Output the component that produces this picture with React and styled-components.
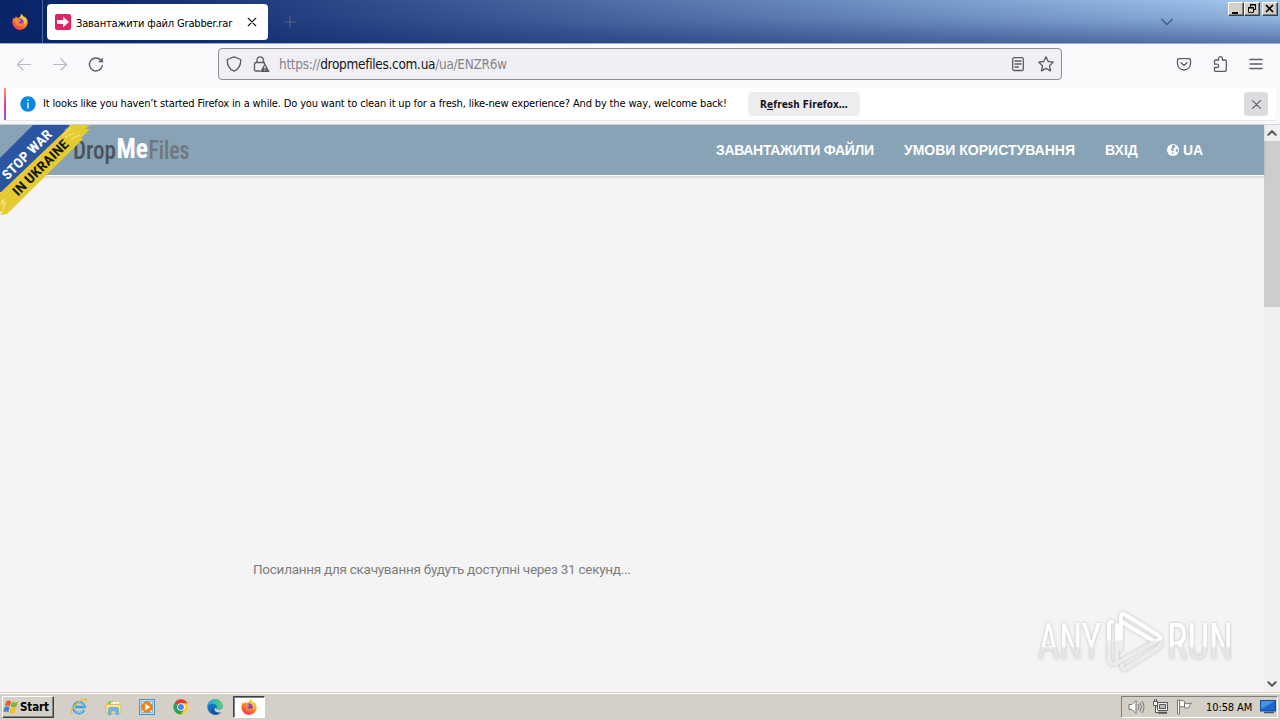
import React from "react";
import styled, { createGlobalStyle } from "styled-components";

const Global = createGlobalStyle`
  * { box-sizing: border-box; }
  body { margin: 0; overflow: hidden; font-family: "DejaVu Sans Condensed", "DejaVu Sans", "Noto Sans", sans-serif; font-stretch: condensed; font-size: 11px; color: #15141a; }
  svg { display: block; flex: none; }
`;

const Desktop = styled.div`
  width: 1280px; height: 720px; display: flex; flex-direction: column; overflow: hidden; background: #f4f4f4;
`;
const TitleBar = styled.header`
  height: 44px; display: flex; flex: none; position: relative;
  border-bottom: 1px solid #a3abc0;
  background: linear-gradient(to bottom, rgba(10,36,106,0) 0%, rgba(10,36,106,.15) 45%, rgba(10,36,106,.5) 100%),
    linear-gradient(to right, #0a246a 0%, #0d286f 8%, #a6caf0 100%);
`;
const Launcher = styled.div`
  width: 43px; padding: 14px 0 0 12px; border-right: 1px solid #536595;
`;
const Tab = styled.div`
  width: 221px; height: 36px; margin: 4px 0 0 4px; padding: 0 11px 0 8px; border-radius: 4px; background: #fff;
  display: flex; align-items: center;
`;
const TabTitle = styled.span`
  flex: 1; margin-left: 5px; padding-top: 2px; font-size: 11px; letter-spacing: -0.16px; white-space: nowrap; color: #000;
`;
const NewTab = styled.div` padding: 16px 0 0 16px; `;
const TabList = styled.div` margin-left: auto; padding: 17px 107px 0 0; `;
const WindowButtons = styled.div` position: absolute; right: 2px; top: 2px; display: flex; `;
const WinButton = styled.div`
  width: 16px; height: 14px; margin-left: ${(p) => (p.$gap ? 2 : 0)}px; background: #d4d0c8;
  border: 1px solid; border-color: #fff #404040 #404040 #fff; box-shadow: inset -1px -1px #808080;
`;
const Toolbar = styled.div`
  height: 44px; flex: none; display: flex; align-items: center; background: #f9f9fb; padding: 0 16px 4px;
  color: #5b5b66;
`;
const NavButtons = styled.div` display: flex; gap: 20px; width: 202px; `;
const AddressBar = styled.div`
  width: 844px; height: 32px; border: 1px solid #8b8b94; border-radius: 4px; background: #f0f0f4;
  display: flex; align-items: center; padding: 0 7px; color: #5b5b66;
`;
const LockIcon = styled.svg` margin-left: 10px; `;
const InfoIcon = styled.svg` margin-left: 14px; `;
const Url = styled.div`
  flex: 1; margin-left: 9px; font-size: 13.5px; letter-spacing: -0.3px; color: #85858d; white-space: nowrap;
  b { font-weight: 400; color: #15141a; }
`;
const BarIcons = styled.div` display: flex; gap: 12px; `;
const ToolIcons = styled.div` display: flex; gap: 20px; margin-left: auto; `;
const NoticeArea = styled.div` height: 37px; flex: none; padding: 0 4px 4px; background: #f9f9fb; border-bottom: 1px solid #cfd8df; `;
const Notice = styled.div`
  height: 32px; display: flex; align-items: center; background: #fff; border-radius: 2px; padding-right: 8px;
  box-shadow: 0 1px 1px #e1e6eb;
`;
const Accent = styled.div` width: 2px; height: 32px; background: linear-gradient(#ff9a6c, #e3418f 50%, #8a55dd); `;
const NoticeText = styled.span`
  margin-left: 7px; width: 705px; padding-bottom: 1px; font-size: 11px; letter-spacing: -0.15px; white-space: nowrap; color: #000;
`;
const RefreshButton = styled.div`
  width: 112px; height: 24px; border-radius: 4px; background: #ededf0; text-align: center; line-height: 25px;
  font-weight: 700; font-size: 10px; letter-spacing: 0.05px;
`;
const Dismiss = styled.div`
  width: 24px; height: 24px; margin-left: auto; border-radius: 4px; background: #dcdcdf; display: grid; place-items: center; color: #5b5b66;
`;
const Viewport = styled.div` flex: 1; min-height: 0; display: flex; `;
const Page = styled.main` flex: 1; position: relative; background: #f4f4f4; display: flex; flex-direction: column; `;
const SiteHeader = styled.div`
  height: 51px; flex: none; background: #87a3b5; border-bottom: 1px solid #fff; box-shadow: 0 1px 3px rgba(0,0,0,.18);
  display: flex; align-items: center; padding-left: 72px;
`;
const Ribbon = styled.svg` position: absolute; left: 0; top: 0; `;
const SiteNav = styled.nav`
  margin-left: auto; padding-right: 62px; display: flex; gap: 30px;
  font: 700 14px "Liberation Sans", Arial, sans-serif; color: #fff; white-space: nowrap;
`;
const NavItem = styled.span` display: flex; align-items: center; gap: 4px; width: ${(p) => p.$w}px; letter-spacing: ${(p) => p.$ls || 0}px; `;
const Countdown = styled.p`
  margin: 383px 0 0 253px; font: 400 13.5px/20px Roboto, sans-serif; color: #7d7d7d; white-space: nowrap; letter-spacing: -0.26px;
`;
const Watermark = styled.svg` position: absolute; left: 1030px; top: 480px; `;
const ScrollBar = styled.div` width: 16px; background: #f0f0f0; display: flex; flex-direction: column; `;
const ScrollArrow = styled.div` height: 16px; display: grid; place-items: center; color: #505050; `;
const Thumb = styled.div` height: 166px; background: #cdcdcd; margin-bottom: auto; `;
const Taskbar = styled.footer`
  height: 28px; flex: none; background: #d4d0c8; box-shadow: inset 0 1px #d4d0c8, inset 0 2px #fff;
  display: flex; padding: 4px 2px 2px; align-items: center;
`;
const StartButton = styled.div`
  width: 52px; height: 22px; border: 1px solid; border-color: #fff #404040 #404040 #fff; box-shadow: inset -1px -1px #808080;
  display: flex; align-items: center; padding-left: 0; gap: 0; font-weight: 700; font-size: 11.5px; letter-spacing: -0.1px; color: #000;
`;
const QuickLaunch = styled.div` display: flex; align-items: center; margin-left: 8px; `;
const TaskItem = styled.div`
  width: ${(p) => (p.$active ? 32 : 34)}px; height: 22px; display: grid; place-items: center;
  margin-left: ${(p) => (p.$active ? 1 : 0)}px;
  background: ${(p) => (p.$active ? "#fff" : "transparent")};
  border: ${(p) => (p.$active ? "1px solid" : "0")}; border-color: #404040 #fff #fff #404040;
  box-shadow: ${(p) => (p.$active ? "inset 1px 1px #808080" : "none")};
`;
const Tray = styled.div`
  margin-left: auto; width: 157px; height: 22px; border: 1px solid; border-color: #808080 #fff #fff #808080;
  display: flex; align-items: center; padding: 0 1px 0 6px; gap: 7px;
`;
const Clock = styled.span` width: 47px; margin-left: 6px; margin-right: 1px; font-size: 11px; letter-spacing: -0.1px; white-space: nowrap; color: #000; `;

const Line = ({ size = 16, children, w = 1.2, ...rest }) => (
  <svg width={size} height={size} viewBox="0 0 16 16" fill="none" stroke="currentColor" strokeWidth={w} strokeLinecap="round" strokeLinejoin="round" {...rest}>{children}</svg>
);

const FirefoxIcon = ({ id }) => (
  <svg width="16" height="16" viewBox="0 0 16 16">
    <defs>
      <linearGradient id={id} x1=".85" y1="0" x2=".25" y2="1">
        <stop offset="0" stopColor="#fff044" /><stop offset=".4" stopColor="#ffa125" />
        <stop offset=".75" stopColor="#ff5b33" /><stop offset="1" stopColor="#f0356a" />
      </linearGradient>
    </defs>
    <path d="M1.6 3.5 2.8 5 4 2.2l1.2 2L8 3.1 9.4 0l1.8 2.3.8 1.4.6-1.2c2 1.6 3.1 3.8 3.1 6A7.6 7.6 0 0 1 8 16 7.6 7.6 0 0 1 .4 8.500c0-1.9.4-3.6 1.200-5Z" fill={`url(#${id})`} />
    <circle cx="8.200" cy="8" r="3.500" fill="#8044d8" />
    <path d="M3.700 5.400c1.500-.8 3.300-.4 4.200.6l1.200.4-1.800 1.200c-1 .5-1 1.600.2 2 1.600.5 2.400-.5 4-.3-.8 2-2.500 2.800-4.300 2.500C4.600 11.400 3 8.500 3.700 5.400Z" fill="#ff8a2d" />
    <path d="M9.400 0 11.400 2.500C14 5 14.200 8 12.400 11c.3-3-.5-4.600-2.100-6C9.200 3.900 8.600 2 9.400 0Z" fill="#ffc933" />
  </svg>
);

const ChromeIcon = () => (
  <svg width="16" height="16" viewBox="0 0 16 16">
    <circle cx="8" cy="8" r="7.600" fill="#fc3" />
    <path d="M8 8 1.400 4.200A7.600 7.600 0 0 1 14.600 4.200H8Z" fill="#e33b2e" />
    <path d="M1.400 4.200A7.600 7.600 0 0 0 8 15.600L11.200 9.900 8 8Z" fill="#2da24c" />
    <circle cx="8" cy="8" r="3.800" fill="#fff" /><circle cx="8" cy="8" r="2.900" fill="#4285f4" />
  </svg>
);

const EdgeIcon = () => (
  <svg width="16" height="16" viewBox="0 0 16 16">
    <defs>
      <linearGradient id="edgeTop"><stop stopColor="#2b9fe0" /><stop offset="1" stopColor="#52d66c" /></linearGradient>
    </defs>
    <circle cx="8" cy="8" r="7.700" fill="#1272c2" />
    <path d="M.4 7.500C1 3 4.200.3 8.200.3c4.500 0 7.500 3 7.500 6.500 0 2.400-1.900 4-4.200 4-1.700 0-2.600-.7-2.200-1.500.8-1.100.7-2.400-.3-3.300C6.700 4 2.400 4.500.4 7.500Z" fill="url(#edgeTop)" />
    <path d="M6.300 8.500c-.3 2.500 1.700 5 4.700 5 1.500 0 2.700-.5 3.400-1-1.600 3-5 3.800-7.600 2.900C3.600 14 3.600 9.800 6.300 8.500Z" fill="#174f9b" />
    <path d="M8.800 8.300c-.4 1.300.8 2.500 2.700 2.500 1.500 0 2.800-.5 4.500-2v3.900l-1.500.3c-2.600 1.300-6.500.3-7-2.200Z" fill="#d4d0c8" />
  </svg>
);

const IeIcon = () => (
  <svg width="18" height="18" viewBox="0 0 18 18" fill="none">
    <path d="M14 12.200a5.500 5.500 0 1 1 .6-3.200H5" stroke="#3f9ede" strokeWidth="2.600" />
    <path d="M13.500 12.200a5 5 0 1 1 .6-3.700" stroke="#8fdcfb" strokeWidth="1" />
    <path d="M2.500 15.800C-1 13.500 5 5.500 11 2.300c4-2.100 6-1.400 5.300 1.700" stroke="#e6ba2b" strokeWidth="1.300" />
  </svg>
);

const FolderIcon = () => (
  <svg width="17" height="17" viewBox="0 0 17 17">
    <path d="M1.500 3.500h5l1 1.500H15v9H1.500Z" fill="#e7c663" />
    <path d="M3 2h5v3H3Z" fill="#7fcf71" /><path d="M6 3h8v3H6Z" fill="#fff3c4" />
    <path d="M1 5.500h15V14H1Z" fill="#f8e59b" stroke="#d5b250" strokeWidth=".7" />
    <path d="M3.500 15.500V10q0-1.500 1.500-1.500h7q1.500 0 1.500 1.500v5.500H11V12H6v3.500Z" fill="#72b8e2" stroke="#4b93c2" strokeWidth=".6" />
  </svg>
);

const PlayerIcon = () => (
  <svg width="16" height="16" viewBox="0 0 16 16">
    <rect x=".5" y=".5" width="15" height="15" fill="#b8dcf4" stroke="#5191c4" />
    <rect x="2.500" y="2.500" width="11" height="11" fill="#e7f4fd" stroke="#89bada" />
    <circle cx="8" cy="8" r="5.300" fill="#f38417" stroke="#d56908" strokeWidth=".6" />
    <path d="M6.300 4.700 11.300 8l-5 3.300Z" fill="#fff" />
  </svg>
);

const WindowsIcon = () => (
  <svg width="17" height="16" viewBox="0 0 17 16">
    <path d="M3.300 2.400C5 1.100 6.800 1.300 8.200 2.300L6.800 7.300C5.300 6.300 3.600 6.300 1.900 7.400Z" fill="#e65c26" />
    <path d="M9 2.800c1.800 1 3.600.9 5.900-.5l-1.500 5.200c-2.100 1.200-4 1.100-5.800.1Z" fill="#7eb82f" />
    <path d="M1.700 8.200c1.800-1 3.400-1 4.900 0l-1.400 5C3.700 12.200 2 12.200.2 13.300Z" fill="#3586d4" />
    <path d="M7.400 8.500c1.900 1 3.700.9 5.800-.3l-1.400 5.200c-2.200 1.400-4 1.300-5.800.3Z" fill="#f5bf26" />
  </svg>
);

const GlobeIcon = () => (
  <svg width="12" height="12" viewBox="0 0 12 12">
    <circle cx="6" cy="6" r="6" fill="#fff" />
    <path d="M5 1.200 8 .8 7.400 2l1.300.5-.9 1.400-1.500.4-.8 1 1.600.5-.8 1.500-1.600-.7-1-1.500 1.300-1.800Zm4 4.100 1.600-.4.4 1.600-1 1.700-1-.5-.5-1.400ZM5.200 8l1.300.8-.6 1.500-1-.8Z" fill="#87a3b5" />
  </svg>
);

/* Text squeezed horizontally to a given drawn width. */
const Squeezed = ({ x, y, width, squeeze, children, ...rest }) => (
  <text transform={`translate(${x} ${y}) scale(${squeeze} 1)`} textLength={width / squeeze} lengthAdjust="spacingAndGlyphs" {...rest}>{children}</text>
);

const SiteLogo = () => (
  <svg width="120" height="40" viewBox="0 0 120 40" fontFamily="Roboto, sans-serif">
    <Squeezed x={1} y={29} width={43} squeeze={0.78} fontSize="25" fontWeight="500" fill="#4b545b">Drop</Squeezed>
    <Squeezed x={44.5} y={28} width={31.5} squeeze={0.78} fontSize="27" fontWeight="700" fill="#fff">Me</Squeezed>
    <Squeezed x={76.5} y={29} width={41} squeeze={0.75} fontSize="25" fontWeight="500" fill="#70777c">Files</Squeezed>
  </svg>
);

const StopWarRibbon = () => (
  <Ribbon width="92" height="92" viewBox="0 0 92 92" fontFamily="Roboto, sans-serif">
    <path d="M0 33 33 0H72L64 5 66 6 3 68 0 67Z" fill="#2a55a0" />
    <path d="M0 68 66 5 70 0 90 0 85 4 90 4 81 13 83 14 7 89 0 90 3 86 0 87Z" fill="#e6ca32" />
    <path d="m0 78 4-4-2 6 4-3-3 7m59-73 9-8m-6 9 9-4m-3 6 9-4" fill="none" stroke="#f8e98c" strokeWidth="1" />
    <g transform="rotate(-45)" fontSize="13.5" fontWeight="700">
      <text x="-34" y="44.500" fill="#fff" textLength="64" lengthAdjust="spacingAndGlyphs">STOP WAR</text>
      <text x="-38" y="63.500" fill="#171918" textLength="73" lengthAdjust="spacingAndGlyphs">IN UKRAINE</text>
    </g>
  </Ribbon>
);

const PlayWatermark = () => (
  <Watermark width="212" height="74" viewBox="0 0 212 74">
    <defs>
      <linearGradient id="wm" x1="0" y1="0" x2="0" y2="74" gradientUnits="userSpaceOnUse">
        <stop offset=".47" stopColor="#fff" /><stop offset=".49" stopColor="#ececec" />
      </linearGradient>
      <linearGradient id="wmText" x1="0" y1="0" x2="0" y2="1">
        <stop offset=".58" stopColor="#fff" /><stop offset=".61" stopColor="#e6e6e6" />
      </linearGradient>
      <filter id="wmShade" x="-10%" y="-10%" width="120%" height="125%">
        <feDropShadow dx="0" dy="0" stdDeviation="1.600" floodColor="#777" floodOpacity=".5" />
      </filter>
    </defs>
    <g filter="url(#wmShade)">
      <g fill="url(#wmText)" fontFamily="Roboto, sans-serif" fontWeight="400" fontSize="50">
        <Squeezed x={8} y={54} width={63} squeeze={0.68}>ANY</Squeezed>
        <Squeezed x={137} y={54} width={66} squeeze={0.68}>RUN</Squeezed>
      </g>
      <g fill="none" stroke="url(#wm)" strokeWidth="4" strokeLinejoin="round" strokeLinecap="round">
        <path d="M91 45V11q0-3 3-2l34 21q5 3 0 5L87 58V20" />
        <path d="M92 17 125 37M87 58l-5 1q-3-1-3-4V20q0-3 3-3M92 60V62q0 3 3 2L127 44q4-3 4-6" />
      </g>
    </g>
  </Watermark>
);

export default function App() {
  return (
    <Desktop>
      <Global />
      <TitleBar>
        <Launcher><FirefoxIcon id="ffTitle" /></Launcher>
        <Tab>
          <svg width="16" height="16" viewBox="0 0 16 16">
            <rect width="16" height="16" rx="2" fill="#df2460" />
            <path d="M2 6h6V2.500L14 8l-6 5.500V10H2Z" fill="#fff" />
          </svg>
          <TabTitle>Завантажити файл Grabber.rar</TabTitle>
          <Line size={10} w={1.800}><path d="M2 2 14 14M14 2 2 14" /></Line>
        </Tab>
        <NewTab><Line size={12} w={1.500} color="#5a6478"><path d="M8 0V16M0 8H16" /></Line></NewTab>
        <TabList><Line size={12} w={2.300} color="#46618d"><path d="m1 3 7 7 7-7" /></Line></TabList>
        <WindowButtons>
          <WinButton><svg width="14" height="12"><path d="M3 9h6v2H3Z" /></svg></WinButton>
          <WinButton><svg width="14" height="12" fill="none" stroke="#000"><path d="M5.500 4V1.500h5v5H9M5 2h6M3.500 4.500h5v5h-5ZM3 5h6" /></svg></WinButton>
          <WinButton $gap><svg width="14" height="12"><path d="m3 2 7 7M10 2 3 9" stroke="#000" strokeWidth="1.700" /></svg></WinButton>
        </WindowButtons>
      </TitleBar>
      <Toolbar>
        <NavButtons>
          <Line color="#b9b9c0"><path d="M1.500 8.500h13M7 3 1.500 8.500 7 14" /></Line>
          <Line color="#b9b9c0"><path d="M1.500 8.500h13M9 3 14.500 8.500 9 14" /></Line>
          <Line w={1.400}><path d="M14.300 9.800A6.500 6.500 0 1 1 12.700 4L14.500 5.800" /><path d="M14.700 1.500v4.700H10Z" fill="currentColor" stroke="none" /></Line>
        </NavButtons>
        <AddressBar>
          <Line w={1.300}><path d="M8 .8 14.700 3.500C15 8.500 13 13 8 15.200 3 13 1 8.500 1.300 3.500Z" /></Line>
          <LockIcon width="18" height="16" viewBox="0 0 18 16" fill="none" stroke="currentColor" strokeWidth="1.300">
            <path d="M5 6.500V4a3.200 3.200 0 0 1 6.400 0v2.500M8 15H4q-1.500 0-1.500-1.500V8q0-1.500 1.500-1.500h8.300V8" />
            <path d="m12.900 7 4.800 9H8Z" fill="currentColor" stroke="none" /><path d="M12.900 10v2.500M12.900 13.500v1" stroke="#fff" strokeWidth="1.100" />
          </LockIcon>
          <Url>https://<b>dropmefiles.com.ua</b>/ua/ENZR6w</Url>
          <BarIcons>
            <Line w={1.300}><rect x="2.700" y="1.700" width="10.600" height="12.800" rx="1.500" /><path d="M5 5h6M5 8h6M5 11h3.500" /></Line>
            <Line w={1.300}><path d="m8 .8 2.200 4.700 5.100.6-3.800 3.600 1 5.200L8 12.400l-4.500 2.500 1-5.200L.7 6.100l5.100-.6Z" /></Line>
          </BarIcons>
        </AddressBar>
        <ToolIcons>
          <Line w={1.300}><path d="M3 2.700h10q1.500 0 1.500 1.500V7.500a6.500 6.500 0 0 1-13 0V4.200Q1.500 2.700 3 2.700ZM5 6.700l3 2.800 3-2.800" /></Line>
          <Line w={1.300}><path d="M2.500 6.500V5q0-1 1-1h3V2.600a1.900 1.900 0 0 1 3.800 0V4H13q1.300 0 1.300 1.300v8.800q0 1.200-1.300 1.200H3.500q-1 0-1-1V11.500H5a1.700 1.700 0 0 0 0-3.400H2.500Z" /></Line>
          <Line w={1.300}><path d="M2 3.500h12M2 8h12M2 12.500h12" /></Line>
        </ToolIcons>
      </Toolbar>
      <NoticeArea>
        <Notice>
          <Accent />
          <InfoIcon width="16" height="16" viewBox="0 0 16 16">
            <circle cx="8" cy="8" r="7.700" fill="#0a87e2" /><path d="M8 3.500v1.500M8 6.500v6" stroke="#fff" strokeWidth="1.400" />
          </InfoIcon>
          <NoticeText>It looks like you haven’t started Firefox in a while. Do you want to clean it up for a fresh, like-new experience? And by the way, welcome back!</NoticeText>
          <RefreshButton>R<u>e</u>fresh Firefox…</RefreshButton>
          <Dismiss><Line size={9} w={2}><path d="M1 1 15 15M15 1 1 15" /></Line></Dismiss>
        </Notice>
      </NoticeArea>
      <Viewport>
        <Page>
          <SiteHeader>
            <SiteLogo />
            <SiteNav>
              <NavItem $w={158} $ls={-0.32}>ЗАВАНТАЖИТИ ФАЙЛИ</NavItem>
              <NavItem $w={171}>УМОВИ КОРИСТУВАННЯ</NavItem>
              <NavItem $w={32}>ВХІД</NavItem>
              <NavItem $w={35}><GlobeIcon />UA</NavItem>
            </SiteNav>
          </SiteHeader>
          <StopWarRibbon />
          <Countdown>Посилання для скачування будуть доступні через 31 секунд...</Countdown>
          <PlayWatermark />
        </Page>
        <ScrollBar>
          <ScrollArrow><Line size={10} w={3}><path d="m2 11 6-6 6 6" /></Line></ScrollArrow>
          <Thumb />
          <ScrollArrow><Line size={10} w={3}><path d="m2 5 6 6 6-6" /></Line></ScrollArrow>
        </ScrollBar>
      </Viewport>
      <Taskbar>
        <StartButton><WindowsIcon />Start</StartButton>
        <QuickLaunch>
          <TaskItem><IeIcon /></TaskItem>
          <TaskItem><FolderIcon /></TaskItem>
          <TaskItem><PlayerIcon /></TaskItem>
          <TaskItem><ChromeIcon /></TaskItem>
          <TaskItem><EdgeIcon /></TaskItem>
          <TaskItem $active><FirefoxIcon id="ffTask" /></TaskItem>
        </QuickLaunch>
        <Tray>
          <svg width="17" height="16" viewBox="0 0 17 16" fill="none" stroke="#777">
            <path d="M1 5.500h3L8 1.500v13L4 10.500H1Z" fill="#fff" /><path d="M10 5q2 3 0 6M12 3.500q3 4.500 0 9M14 2q4 6 0 12" />
          </svg>
          <svg width="17" height="16" viewBox="0 0 17 16" fill="none" stroke="#555">
            <path d="M5.500 3.500h10v8h-10Z" fill="#eee" /><path d="M7.500 5.500h6v4h-6Z" fill="#bbb" /><path d="M6 13.800h9" strokeWidth="2" />
            <path d="M1.500 2.500h4v4h-4ZM2.500 0v2M4.500 0v2M3.500 7v6.500h3" fill="#fff" />
          </svg>
          <svg width="17" height="16" viewBox="0 0 17 16" fill="#fff" stroke="#777">
            <path d="M1.500 1h2v14h-2ZM3.500 2q3-1.500 5 .5v6q-2-2-5-.5ZM8.500 4q3 1.500 7 0-2.500 2-3 5-2 .5-4-.5Z" />
          </svg>
          <Clock>10:58 AM</Clock>
          <svg width="16" height="14" viewBox="0 0 16 14">
            <rect x=".5" y=".5" width="15" height="10.500" fill="#1e66c8" stroke="#164a92" /><path d="M1 1h14L1 9Z" fill="#4a91e2" /><path d="M4 12.500h10" stroke="#37537c" strokeWidth="1.500" />
          </svg>
        </Tray>
      </Taskbar>
    </Desktop>
  );
}
